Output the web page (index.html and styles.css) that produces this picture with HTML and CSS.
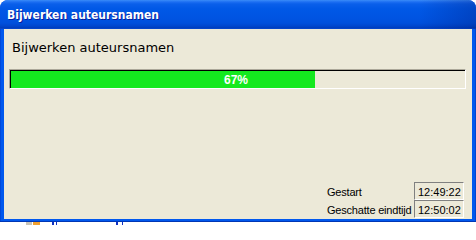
FILE: index.html
```html
<!DOCTYPE html>
<html>
<head>
<meta charset="utf-8">
<title>Bijwerken auteursnamen</title>
<link rel="stylesheet" href="styles.css">
</head>
<body>
<div class="window">
  <div class="titlebar"><span class="title">Bijwerken auteursnamen</span></div>
  <div class="frame">
    <div class="client">
      <div class="heading">Bijwerken auteursnamen</div>
      <div class="progress">
        <div class="fill" style="width: 67%"></div>
        <span class="pct">67%</span>
      </div>
      <div class="stats">
        <span class="label">Gestart</span>
        <span class="value">12:49:22</span>
        <span class="label">Geschatte eindtijd</span>
        <span class="value">12:50:02</span>
      </div>
    </div>
  </div>
</div>
<div class="taskbar">
  <span class="tb tb-gray"></span>
  <span class="tb tb-orange"></span>
  <span class="tb tb-blue"></span>
  <span class="tb tb-blue2"></span>
  <span class="tb tb-blue3"></span>
  <span class="tb tb-blue4"></span>
</div>
</body>
</html>
```
FILE: styles.css
```css
html, body {
  margin: 0;
  padding: 0;
  background: #ffffff;
}

body {
  width: 476px;
  height: 225px;
  overflow: hidden;
  font-family: "DejaVu Sans", sans-serif;
}

.window {
  width: 476px;
  border-radius: 8px 8px 0 0;
  overflow: hidden;
  background: #0052E4;
  display: flex;
  flex-direction: column;
}

.titlebar {
  height: 29px;
  box-sizing: border-box;
  padding-left: 7px;
  display: flex;
  align-items: center;
  background:
    linear-gradient(to right, rgba(0, 0, 0, 0) 88%, rgba(0, 20, 110, 0.28) 100%),
    linear-gradient(to bottom, #3A8CF8 0px, #1C6EF2 2px, #0A5FEA 4px, #0058E6 9px, #0054E2 18px, #0050DC 23px, #0047CE 26px, #003CBC 28px, #0A4FD6 29px);
}

.title {
  color: #ffffff;
  font-family: "DejaVu Sans Condensed", "DejaVu Sans", sans-serif;
  font-weight: bold;
  font-size: 12px;
  line-height: 14px;
  margin-top: 1px;
  text-shadow: 1px 1px 0 #0A1E9E;
}

.frame {
  padding: 0 4px 3px 4px;
  background: linear-gradient(to right, #0038C8 0, #0058EE 1px, #0058EE 475px, #0034B0 476px);
  box-shadow: inset 0 -1px 0 #0036B4;
}

.client {
  height: 190px;
  box-sizing: border-box;
  background: #ECE9D8;
  padding: 11px 0 1px 0;
  display: flex;
  flex-direction: column;
}

.heading {
  font-family: "DejaVu Sans", sans-serif;
  font-size: 13px;
  line-height: 16px;
  color: #000000;
  padding-left: 8px;
}

.progress {
  position: relative;
  margin: 13px 6px 0 5px;
  height: 20px;
  box-sizing: border-box;
  border-top: 1px solid #ACA899;
  border-left: 1px solid #ACA899;
  border-right: 1px solid #ffffff;
  border-bottom: 1px solid #ffffff;
  box-shadow: inset 1px 1px 0 #000000;
  padding: 1px 0 0 1px;
  display: flex;
  align-items: stretch;
}

.fill {
  background: #14E91F;
  height: 17px;
}

.pct {
  position: absolute;
  left: 0;
  right: 0;
  top: 1px;
  height: 17px;
  display: flex;
  align-items: center;
  justify-content: center;
  padding-right: 3px;
  color: #ffffff;
  font-family: "Liberation Sans", Arial, sans-serif;
  font-weight: bold;
  font-size: 12px;
}

.stats {
  margin-top: auto;
  display: grid;
  grid-template-columns: 87px 50px;
  grid-auto-rows: 18px;
  justify-content: end;
  padding-right: 8px;
  font-family: "Liberation Sans", Arial, sans-serif;
  font-size: 11px;
  color: #000000;
}

.label {
  display: flex;
  align-items: center;
  letter-spacing: -0.2px;
  padding-top: 1px;
}

.value {
  box-sizing: border-box;
  border-top: 1px solid #808080;
  border-left: 1px solid #808080;
  border-right: 1px solid #ffffff;
  border-bottom: 1px solid #ffffff;
  padding-left: 3px;
  display: flex;
  align-items: center;
  padding-top: 1px;
}

.taskbar {
  height: 3px;
  display: flex;
  background: #ffffff;
}

.tb {
  height: 3px;
  display: block;
}

.tb-gray { width: 6px; margin-left: 26px; background: #C8C4B8; }
.tb-orange { width: 7px; margin-left: 1px; background: #F0A030; }
.tb-blue { width: 2px; margin-left: 12px; background: #1030C0; }
.tb-blue2 { width: 1px; margin-left: 2px; background: #1030C0; }
.tb-blue3 { width: 2px; margin-left: 59px; background: #1030C0; }
.tb-blue4 { width: 1px; margin-left: 4px; background: #1030C0; }
```
